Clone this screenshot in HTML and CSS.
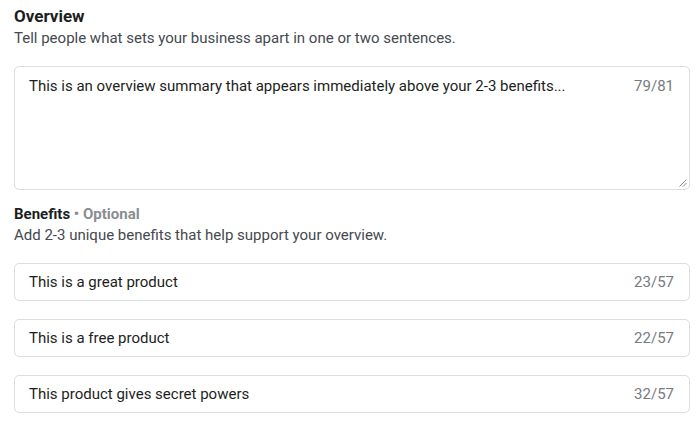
FILE: index.html
```html
<!DOCTYPE html>
<html>
<head>
<meta charset="utf-8">
<link rel="stylesheet" href="styles.css">
</head>
<body>
<div class="page">
  <section class="section">
    <div class="title">Overview</div>
    <div class="desc">Tell people what sets your business apart in one or two sentences.</div>
    <div class="field area">
      <span class="value">This is an overview summary that appears immediately above your 2-3 benefits...</span>
      <span class="count">79/81</span>
      <svg class="grip" width="9" height="9" viewBox="0 0 9 9"><path d="M8.5 1.5L1.5 8.5M8.5 5L5 8.5" stroke="#8a8a8a" stroke-width="1" fill="none"/></svg>
    </div>
  </section>
  <section class="section benefits">
    <div class="title small">Benefits <span class="opt">• Optional</span></div>
    <div class="desc second">Add 2-3 unique benefits that help support your overview.</div>
    <div class="list">
      <div class="field line"><span class="value">This is a great product</span><span class="count">23/57</span></div>
      <div class="field line"><span class="value">This is a free product</span><span class="count">22/57</span></div>
      <div class="field line"><span class="value">This product gives secret powers</span><span class="count">32/57</span></div>
    </div>
  </section>
</div>
</body>
</html>
```
FILE: styles.css
```css
* { box-sizing: border-box; }
html, body { margin: 0; background: #fff; }
body { font-family: Roboto, "Liberation Sans", Arial, sans-serif; color: #1c1e21; }
.page { padding: 6px 10px 0 14px; width: 700px; }
.title { font-size: 17px; font-weight: 700; line-height: 20px; color: #1c1e21; }
.title.small { font-size: 15px; line-height: 18px; }
.opt { color: #8a8d91; font-weight: 700; }
.desc { font-size: 15px; line-height: 20px; color: #444950; margin-top: 2px; }
.desc.second { margin-top: 2px; }
.field { border: 1px solid #dadde1; border-radius: 5px; display: flex; justify-content: space-between; align-items: flex-start; font-size: 15px; position: relative; background: #fff; }
.value { color: #1c1e21; }
.count { color: #777a7f; }
.area { margin-top: 18px; height: 124px; padding: 9px 15px 0 14px; line-height: 20px; }
.grip { position: absolute; right: 2px; bottom: 2px; }
.benefits { margin-top: 15px; }
.list { display: flex; flex-direction: column; gap: 18px; margin-top: 18px; }
.line { height: 38px; align-items: center; padding: 0 15px 0 14px; }
```
